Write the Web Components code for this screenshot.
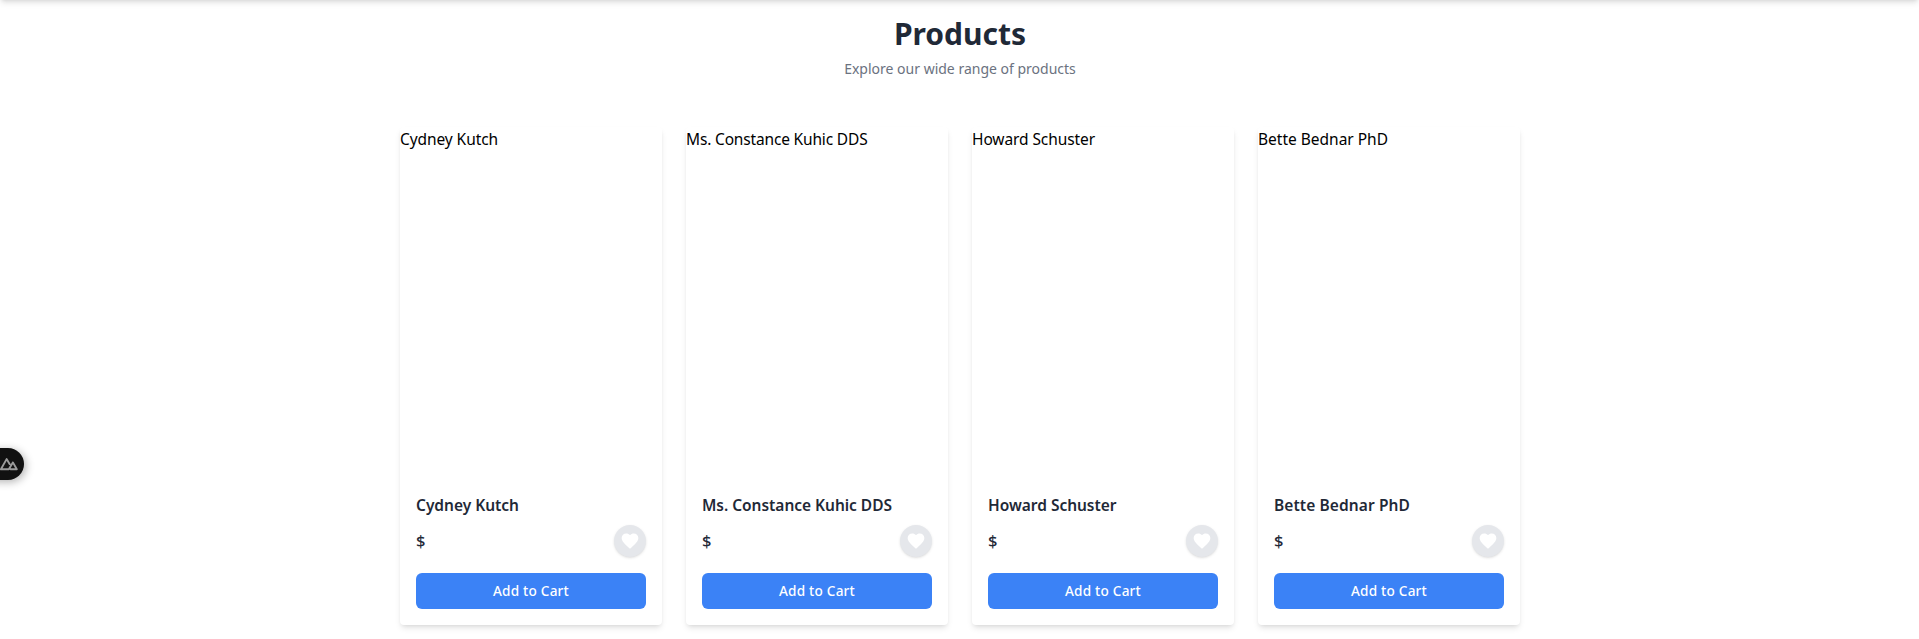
<!DOCTYPE html>
<html lang="en">
<head>
<meta charset="utf-8">
<title>Products</title>
<style>
html,body{margin:0;height:100%;overflow:hidden}
body{background:#fff;color:#000;font:16px/24px "Noto Sans",sans-serif}
</style>
</head>
<body>
<products-page></products-page>
<script>
// Text whose letters are spaced so that the line has a given advance width.
class FitText extends HTMLElement{
  constructor(){super();this.attachShadow({mode:'open'}).innerHTML=`<style>:host{display:inline-block;white-space:nowrap}span{display:inline-block}</style><span></span>`}
  connectedCallback(){
    const s=this.shadowRoot.querySelector('span');
    s.textContent=this.getAttribute('text');
    const w=+this.getAttribute('width');
    if(w)s.style.letterSpacing=((w-s.getBoundingClientRect().width)/s.textContent.length).toFixed(4)+'px';
  }
}
class PageHeading extends HTMLElement{
  constructor(){super();this.attachShadow({mode:'open'}).innerHTML=`<style>
:host{display:block;text-align:center}
h1{margin:0;font-size:30px;line-height:36px;font-weight:700;color:#1f2937}
p{margin:7px 0 0;font-size:14px;line-height:20px;color:#6b7280}
</style><h1><slot name="title"></slot></h1><p><slot></slot></p>`}
}
class FavButton extends HTMLElement{
  constructor(){super();this.attachShadow({mode:'open'}).innerHTML=`<style>
:host{display:block;width:32px;height:32px}
button{all:unset;box-sizing:border-box;display:flex;align-items:center;justify-content:center;width:32px;height:32px;border-radius:50%;background:#e5e7eb;box-shadow:0 1px 3px rgba(0,0,0,.1),0 1px 2px -1px rgba(0,0,0,.1)}
svg{display:block;width:20px;height:20px;fill:#fff}
</style><button aria-label="Favourite"><svg viewBox="0 0 24 24"><path d="M12 21.35l-1.45-1.32C5.4 15.36 2 12.27 2 8.5 2 5.41 4.42 3 7.5 3c1.74 0 3.41.81 4.5 2.08C13.09 3.81 14.76 3 16.5 3 19.58 3 22 5.41 22 8.5c0 3.77-3.4 6.86-8.55 11.53z"/></svg></button>`}
}
class CartButton extends HTMLElement{
  constructor(){super();this.attachShadow({mode:'open'}).innerHTML=`<style>
:host{display:block}
button{all:unset;box-sizing:border-box;display:block;width:100%;height:36px;padding:8px 0;border-radius:6px;background:#3b82f6;color:#fff;text-align:center;font-size:13.6px;line-height:20px;font-weight:500}
</style><button><fit-text text="Add to Cart" width="76"></fit-text></button>`}
}
class ProductCard extends HTMLElement{
  connectedCallback(){
    const n=this.getAttribute('name');
    this.attachShadow({mode:'open'}).innerHTML=`<style>
:host{display:block;background:#fff;border-radius:4px;box-shadow:0 4px 6px -1px rgba(0,0,0,.1),0 2px 4px -2px rgba(0,0,0,.1)}
.photo{height:350px;overflow:hidden;font-size:15.5px}
.body{padding:16px}
h2{margin:0 0 8px;height:24px;font-size:15.5px;line-height:24px;font-weight:600;color:#1f2937}
.row{display:flex;align-items:center;justify-content:space-between;margin-bottom:16px}
.price{font-size:16.5px;font-weight:500;color:#1f2937}
</style>
<div class="photo"><fit-text text="${n}" width="${this.getAttribute('alt-width')}"></fit-text></div>
<div class="body"><h2><fit-text text="${n}" width="${this.getAttribute('name-width')}"></fit-text></h2>
<div class="row"><span class="price">$</span><fav-button></fav-button></div>
<cart-button></cart-button></div>`;
  }
}
class DevBadge extends HTMLElement{
  constructor(){super();this.attachShadow({mode:'open'}).innerHTML=`<style>
:host{position:absolute;left:-20px;top:448px;width:44px;height:32px;border-radius:16px;background:#111;box-shadow:2px 2px 8px rgba(0,0,0,.3);display:flex;align-items:center}
svg{display:block;margin-left:20px;width:18px;height:14px;fill:none;stroke:#9a9a9a;stroke-width:1.9;stroke-linejoin:round;stroke-linecap:round}
</style><svg viewBox="0 0 18 14"><path d="M10.6 12.3H16.8L12.9 5.4L8.8 12.3H.9L6.6 2.1L9.6 7.1"/></svg>`}
}
class ProductsPage extends HTMLElement{
  constructor(){super();this.attachShadow({mode:'open'}).innerHTML=`<style>
:host{display:block;position:relative;height:639px;overflow:hidden}
.nav{height:64px;margin-top:-64px;box-shadow:0 4px 6px -1px rgba(0,0,0,.1),0 2px 4px -2px rgba(0,0,0,.1)}
main{width:1120px;margin:0 auto;padding:16px 0 0 1px}
.grid{display:grid;grid-template-columns:repeat(4,262px);gap:24px;margin-top:48px}
</style>
<div class="nav"></div>
<main><page-heading><span slot="title">Products</span>Explore our wide range of products</page-heading>
<div class="grid">
<product-card name="Cydney Kutch" alt-width="98" name-width="103"></product-card>
<product-card name="Ms. Constance Kuhic DDS" alt-width="181.5" name-width="190"></product-card>
<product-card name="Howard Schuster" alt-width="123" name-width="128.5"></product-card>
<product-card name="Bette Bednar PhD" alt-width="130" name-width="136"></product-card>
</div></main>
<dev-badge></dev-badge>`}
}
customElements.define('fit-text',FitText);
customElements.define('page-heading',PageHeading);
customElements.define('fav-button',FavButton);
customElements.define('cart-button',CartButton);
customElements.define('product-card',ProductCard);
customElements.define('dev-badge',DevBadge);
customElements.define('products-page',ProductsPage);
</script>
</body>
</html>
